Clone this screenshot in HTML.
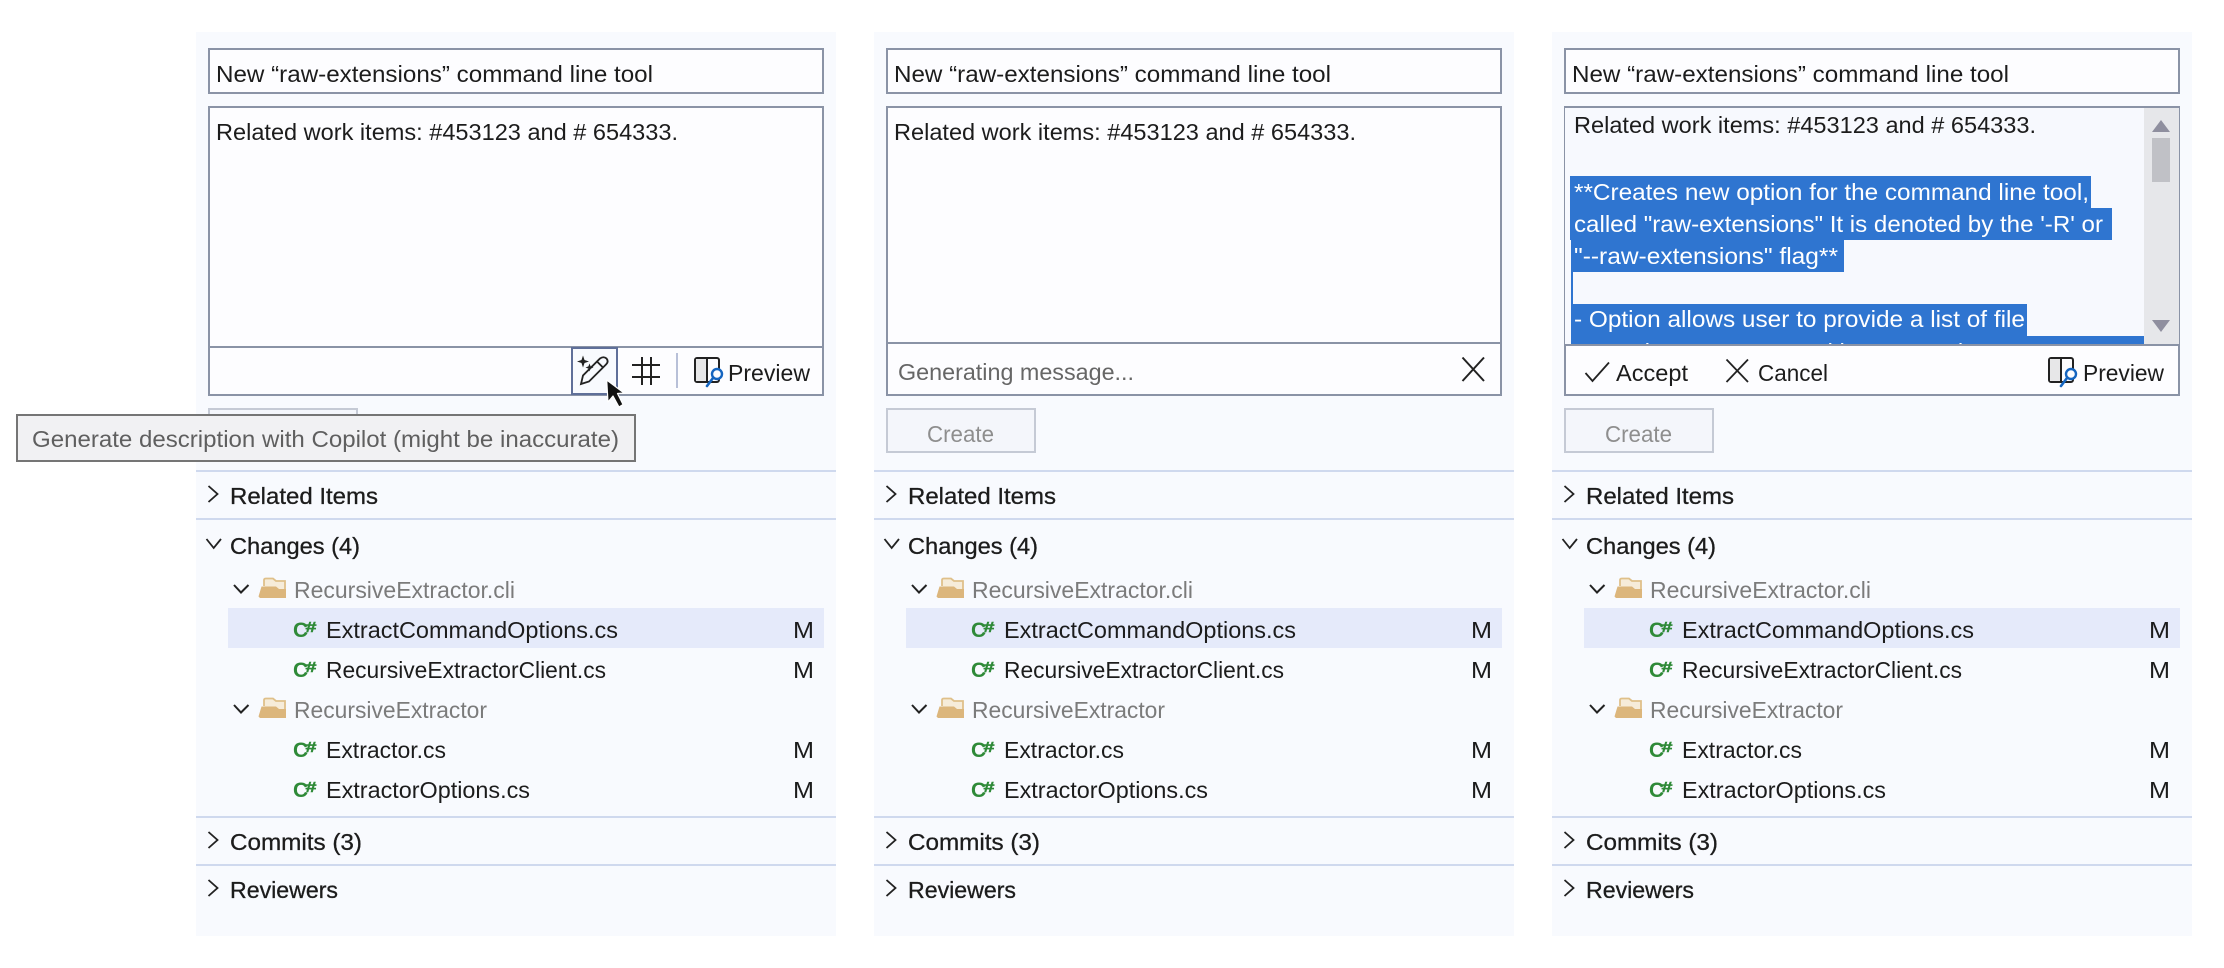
<!DOCTYPE html>
<html lang="en">
<head>
<meta charset="utf-8">
<title>Pull request panels</title>
<style>
html,body{margin:0;padding:0;background:#fff;width:2224px;height:968px;overflow:hidden}
svg{display:block;filter:blur(.3px)}
text{font-family:"Liberation Sans",sans-serif;font-size:23px;fill:#1c1c1c}
.h{stroke:#1c1c1c;stroke-width:.3px}
.g{fill:#7b7b7b}
.c{font-size:21px;font-weight:bold;fill:#2f8a38}
.s{font-size:15px;font-weight:bold;fill:#2f8a38;stroke:#2f8a38;stroke-width:.5px}
.w{fill:#fff}
.ic{fill:none;stroke:#222;stroke-width:1.8}
.box{fill:#fdfdff;stroke:#8a93a6;stroke-width:2}
.ln{fill:#cfd9ee}
</style>
</head>
<body>
<svg width="2224" height="968" viewBox="0 0 2224 968" xmlns="http://www.w3.org/2000/svg">
<defs>
<clipPath id="ta"><rect x="1565" y="107" width="579" height="237"/></clipPath>
<g id="fold">
<path d="M264,586 V580 Q264,578.5 266,578.5 H273 L276,581 H285 V598" fill="#f6ecda" stroke="#dfc08a" stroke-width="1.8"/>
<path d="M258.5,596.5 L261.5,586.5 H276 L279,589 H286 V598 H260 Z" fill="#dcb67c"/>
</g>
<g id="prev">
<rect x="695" y="358" width="24" height="24" rx="2" fill="#fdfdff" stroke="#222" stroke-width="2"/>
<rect x="696" y="359" width="11" height="22" fill="#e7e7e8"/>
<path d="M707,358 V382" stroke="#222" stroke-width="2"/>
<path d="M713,378 L707,386" stroke="#1565c0" stroke-width="2.6" stroke-linecap="round"/>
<circle cx="717" cy="374" r="5" fill="#fdfdff" stroke="#1565c0" stroke-width="2.4"/>
</g>
</defs>

<rect width="2224" height="968" fill="#fff"/>

<!-- PANEL 1 -->
<g>
<rect x="196" y="32" width="640" height="904" fill="#f8fafe"/>
<rect class="box" x="209" y="49" width="614" height="44"/>
<text x="216" y="82" textLength="437" lengthAdjust="spacingAndGlyphs">New “raw-extensions” command line tool</text>
<rect class="box" x="209" y="107" width="614" height="288"/>
<rect x="208" y="346" width="616" height="2" fill="#8a93a6"/>
<text x="216" y="140" textLength="462" lengthAdjust="spacingAndGlyphs">Related work items: #453123 and # 654333.</text>
<rect x="572" y="348" width="45" height="46" fill="#f8fafe" stroke="#5f6f99" stroke-width="2"/>
<path d="M583,355.5 L584.5,360 L589,361.5 L584.5,363 L583,367.5 L581.5,363 L577,361.5 L581.5,360 Z" fill="#222"/>
<path d="M589.5,363.5 L590.6,366.4 L593.5,367.5 L590.6,368.6 L589.5,371.5 L588.4,368.6 L585.5,367.5 L588.4,366.4 Z" fill="#222"/>
<path class="ic" d="M581,384 L583,375.5 L600,358.5 Q603.5,356 606.5,358.5 Q609,361.5 606,364.5 L589,381.5 Z M597,361.5 L603.5,368"/>
<path d="M642,357 V385 M651,357 V385 M632,365 H660 M632,377 H660" fill="none" stroke="#222" stroke-width="2"/>
<rect x="676" y="353" width="2" height="35" fill="#b8c0d8"/>
<use href="#prev"/>
<text x="728" y="381" textLength="82" lengthAdjust="spacingAndGlyphs">Preview</text>
<rect x="209" y="409" width="148" height="43" fill="#f4f6fb" stroke="#c5cad5" stroke-width="2"/>
<text class="g" x="273" y="442" textLength="67" lengthAdjust="spacingAndGlyphs" style="fill:#8e8e8e">Create</text>

<rect class="ln" x="196" y="470" width="640" height="2"/>
<path class="ic" d="M208.5,486 L217.5,494 L208.5,502"/>
<text class="h" x="230" y="504" textLength="148" lengthAdjust="spacingAndGlyphs">Related Items</text>
<rect class="ln" x="196" y="518" width="640" height="2"/>
<path class="ic" d="M206.5,539 L213.7,548 L221,539"/>
<text class="h" x="230" y="554" textLength="130" lengthAdjust="spacingAndGlyphs">Changes (4)</text>

<path class="ic" style="stroke-width:2" d="M234,585 L241,592.5 L248.5,585"/>
<use href="#fold"/>
<text class="g" x="294" y="598" textLength="221" lengthAdjust="spacingAndGlyphs">RecursiveExtractor.cli</text>

<rect x="228" y="608" width="596" height="40" fill="#e5eafa"/>
<text class="c" x="293" y="637">C</text><text class="s" x="305.5" y="632" textLength="11" lengthAdjust="spacingAndGlyphs">#</text>
<text x="326" y="638" textLength="292" lengthAdjust="spacingAndGlyphs">ExtractCommandOptions.cs</text>
<text x="793" y="638" textLength="21" lengthAdjust="spacingAndGlyphs">M</text>

<text class="c" x="293" y="677">C</text><text class="s" x="305.5" y="672" textLength="11" lengthAdjust="spacingAndGlyphs">#</text>
<text x="326" y="678" textLength="280" lengthAdjust="spacingAndGlyphs">RecursiveExtractorClient.cs</text>
<text x="793" y="678" textLength="21" lengthAdjust="spacingAndGlyphs">M</text>

<path class="ic" style="stroke-width:2" d="M234,705 L241,712.5 L248.5,705"/>
<use href="#fold" y="120"/>
<text class="g" x="294" y="718" textLength="193" lengthAdjust="spacingAndGlyphs">RecursiveExtractor</text>

<text class="c" x="293" y="757">C</text><text class="s" x="305.5" y="752" textLength="11" lengthAdjust="spacingAndGlyphs">#</text>
<text x="326" y="758" textLength="120" lengthAdjust="spacingAndGlyphs">Extractor.cs</text>
<text x="793" y="758" textLength="21" lengthAdjust="spacingAndGlyphs">M</text>

<text class="c" x="293" y="797">C</text><text class="s" x="305.5" y="792" textLength="11" lengthAdjust="spacingAndGlyphs">#</text>
<text x="326" y="798" textLength="204" lengthAdjust="spacingAndGlyphs">ExtractorOptions.cs</text>
<text x="793" y="798" textLength="21" lengthAdjust="spacingAndGlyphs">M</text>

<rect class="ln" x="196" y="816" width="640" height="2"/>
<path class="ic" d="M208.5,832 L217.5,840 L208.5,848"/>
<text class="h" x="230" y="850" textLength="132" lengthAdjust="spacingAndGlyphs">Commits (3)</text>
<rect class="ln" x="196" y="864" width="640" height="2"/>
<path class="ic" d="M208.5,880 L217.5,888 L208.5,896"/>
<text class="h" x="230" y="898" textLength="108" lengthAdjust="spacingAndGlyphs">Reviewers</text>

<!-- tooltip -->
<rect x="17" y="415" width="618" height="46" fill="#f1f1f3" stroke="#757575" stroke-width="2"/>
<text x="32" y="447" textLength="587" lengthAdjust="spacingAndGlyphs" style="fill:#5f5f5f">Generate description with Copilot (might be inaccurate)</text>
<!-- cursor -->
<path d="M606.7,380 L608,402 L613,396 L619,407 L623,404.5 L617.5,393.5 L624,393 Z" fill="#111" stroke="#fff" stroke-width="1.2" stroke-linejoin="round"/>
</g>

<!-- PANEL 2 -->
<g transform="translate(678 0)">
<rect x="196" y="32" width="640" height="904" fill="#f8fafe"/>
<rect class="box" x="209" y="49" width="614" height="44"/>
<text x="216" y="82" textLength="437" lengthAdjust="spacingAndGlyphs">New “raw-extensions” command line tool</text>
<rect class="box" x="209" y="107" width="614" height="288"/>
<rect x="208" y="342" width="616" height="2" fill="#8a93a6"/>
<text x="216" y="140" textLength="462" lengthAdjust="spacingAndGlyphs">Related work items: #453123 and # 654333.</text>
<text x="220" y="380" textLength="236" lengthAdjust="spacingAndGlyphs" style="fill:#666">Generating message...</text>
<path class="ic" style="stroke-width:2" d="M784.5,357.5 L806,381 M806,357.5 L784.5,381"/>
<rect x="209" y="409" width="148" height="43" fill="#f4f6fb" stroke="#c5cad5" stroke-width="2"/>
<text class="g" x="249" y="442" textLength="67" lengthAdjust="spacingAndGlyphs" style="fill:#8e8e8e">Create</text>

<rect class="ln" x="196" y="470" width="640" height="2"/>
<path class="ic" d="M208.5,486 L217.5,494 L208.5,502"/>
<text class="h" x="230" y="504" textLength="148" lengthAdjust="spacingAndGlyphs">Related Items</text>
<rect class="ln" x="196" y="518" width="640" height="2"/>
<path class="ic" d="M206.5,539 L213.7,548 L221,539"/>
<text class="h" x="230" y="554" textLength="130" lengthAdjust="spacingAndGlyphs">Changes (4)</text>

<path class="ic" style="stroke-width:2" d="M234,585 L241,592.5 L248.5,585"/>
<use href="#fold"/>
<text class="g" x="294" y="598" textLength="221" lengthAdjust="spacingAndGlyphs">RecursiveExtractor.cli</text>

<rect x="228" y="608" width="596" height="40" fill="#e5eafa"/>
<text class="c" x="293" y="637">C</text><text class="s" x="305.5" y="632" textLength="11" lengthAdjust="spacingAndGlyphs">#</text>
<text x="326" y="638" textLength="292" lengthAdjust="spacingAndGlyphs">ExtractCommandOptions.cs</text>
<text x="793" y="638" textLength="21" lengthAdjust="spacingAndGlyphs">M</text>

<text class="c" x="293" y="677">C</text><text class="s" x="305.5" y="672" textLength="11" lengthAdjust="spacingAndGlyphs">#</text>
<text x="326" y="678" textLength="280" lengthAdjust="spacingAndGlyphs">RecursiveExtractorClient.cs</text>
<text x="793" y="678" textLength="21" lengthAdjust="spacingAndGlyphs">M</text>

<path class="ic" style="stroke-width:2" d="M234,705 L241,712.5 L248.5,705"/>
<use href="#fold" y="120"/>
<text class="g" x="294" y="718" textLength="193" lengthAdjust="spacingAndGlyphs">RecursiveExtractor</text>

<text class="c" x="293" y="757">C</text><text class="s" x="305.5" y="752" textLength="11" lengthAdjust="spacingAndGlyphs">#</text>
<text x="326" y="758" textLength="120" lengthAdjust="spacingAndGlyphs">Extractor.cs</text>
<text x="793" y="758" textLength="21" lengthAdjust="spacingAndGlyphs">M</text>

<text class="c" x="293" y="797">C</text><text class="s" x="305.5" y="792" textLength="11" lengthAdjust="spacingAndGlyphs">#</text>
<text x="326" y="798" textLength="204" lengthAdjust="spacingAndGlyphs">ExtractorOptions.cs</text>
<text x="793" y="798" textLength="21" lengthAdjust="spacingAndGlyphs">M</text>

<rect class="ln" x="196" y="816" width="640" height="2"/>
<path class="ic" d="M208.5,832 L217.5,840 L208.5,848"/>
<text class="h" x="230" y="850" textLength="132" lengthAdjust="spacingAndGlyphs">Commits (3)</text>
<rect class="ln" x="196" y="864" width="640" height="2"/>
<path class="ic" d="M208.5,880 L217.5,888 L208.5,896"/>
<text class="h" x="230" y="898" textLength="108" lengthAdjust="spacingAndGlyphs">Reviewers</text>
</g>

<!-- PANEL 3 -->
<g transform="translate(1356 0)">
<rect x="196" y="32" width="640" height="904" fill="#f8fafe"/>
<rect class="box" x="209" y="49" width="614" height="44"/>
<text x="216" y="82" textLength="437" lengthAdjust="spacingAndGlyphs">New “raw-extensions” command line tool</text>
<rect class="box" x="209" y="107" width="614" height="288"/>
<rect x="209" y="108" width="614" height="236" fill="#f7f9fe"/>
<rect x="788" y="108" width="35" height="236" fill="#e6e7ea"/>
<path d="M796,132 L805,120 L814,132 Z" fill="#8f8f9f"/>
<rect x="796" y="138" width="18" height="44" fill="#c0c1c6"/>
<path d="M796,320 L814,320 L805,332 Z" fill="#8f8f9f"/>
<rect x="208" y="344" width="616" height="2" fill="#8a93a6"/>
<rect x="208" y="106" width="616" height="2" fill="#8a93a6"/>
</g>
<!-- selection & text, absolute coords -->
<g clip-path="url(#ta)">
<text x="1574" y="133" textLength="462" lengthAdjust="spacingAndGlyphs">Related work items: #453123 and # 654333.</text>
<rect x="1570" y="176" width="521" height="32" fill="#2f75d0"/>
<rect x="1570" y="208" width="542" height="32" fill="#2f75d0"/>
<rect x="1571" y="240" width="273" height="32" fill="#2f75d0"/>
<rect x="1571" y="272" width="2" height="32" fill="#2f75d0"/>
<rect x="1571" y="304" width="456" height="32" fill="#2f75d0"/>
<rect x="1571" y="336" width="573" height="8" fill="#2f75d0"/>
<text class="w" x="1574" y="200" textLength="515" lengthAdjust="spacingAndGlyphs">**Creates new option for the command line tool,</text>
<text class="w" x="1574" y="232" textLength="529" lengthAdjust="spacingAndGlyphs">called "raw-extensions" It is denoted by the '-R' or</text>
<text class="w" x="1574" y="264" textLength="264" lengthAdjust="spacingAndGlyphs">"--raw-extensions" flag**</text>
<text class="w" x="1574" y="327" textLength="451" lengthAdjust="spacingAndGlyphs">- Option allows user to provide a list of file</text>
<text class="w" x="1575" y="360" textLength="400" lengthAdjust="spacingAndGlyphs">extensions to process with commands</text>
</g>
<g>
<path class="ic" d="M1585.5,373 L1592.5,381 L1609,362.5"/>
<text x="1616" y="381" textLength="72" lengthAdjust="spacingAndGlyphs">Accept</text>
<path class="ic" d="M1726.5,359.5 L1748,382 M1748,359.5 L1726.5,382"/>
<text x="1758" y="381" textLength="70" lengthAdjust="spacingAndGlyphs">Cancel</text>
<use href="#prev" x="1354"/>
<text x="2083" y="381" textLength="81" lengthAdjust="spacingAndGlyphs">Preview</text>
</g>
<g transform="translate(1356 0)">
<rect x="209" y="409" width="148" height="43" fill="#f4f6fb" stroke="#c5cad5" stroke-width="2"/>
<text class="g" x="249" y="442" textLength="67" lengthAdjust="spacingAndGlyphs" style="fill:#8e8e8e">Create</text>

<rect class="ln" x="196" y="470" width="640" height="2"/>
<path class="ic" d="M208.5,486 L217.5,494 L208.5,502"/>
<text class="h" x="230" y="504" textLength="148" lengthAdjust="spacingAndGlyphs">Related Items</text>
<rect class="ln" x="196" y="518" width="640" height="2"/>
<path class="ic" d="M206.5,539 L213.7,548 L221,539"/>
<text class="h" x="230" y="554" textLength="130" lengthAdjust="spacingAndGlyphs">Changes (4)</text>

<path class="ic" style="stroke-width:2" d="M234,585 L241,592.5 L248.5,585"/>
<use href="#fold"/>
<text class="g" x="294" y="598" textLength="221" lengthAdjust="spacingAndGlyphs">RecursiveExtractor.cli</text>

<rect x="228" y="608" width="596" height="40" fill="#e5eafa"/>
<text class="c" x="293" y="637">C</text><text class="s" x="305.5" y="632" textLength="11" lengthAdjust="spacingAndGlyphs">#</text>
<text x="326" y="638" textLength="292" lengthAdjust="spacingAndGlyphs">ExtractCommandOptions.cs</text>
<text x="793" y="638" textLength="21" lengthAdjust="spacingAndGlyphs">M</text>

<text class="c" x="293" y="677">C</text><text class="s" x="305.5" y="672" textLength="11" lengthAdjust="spacingAndGlyphs">#</text>
<text x="326" y="678" textLength="280" lengthAdjust="spacingAndGlyphs">RecursiveExtractorClient.cs</text>
<text x="793" y="678" textLength="21" lengthAdjust="spacingAndGlyphs">M</text>

<path class="ic" style="stroke-width:2" d="M234,705 L241,712.5 L248.5,705"/>
<use href="#fold" y="120"/>
<text class="g" x="294" y="718" textLength="193" lengthAdjust="spacingAndGlyphs">RecursiveExtractor</text>

<text class="c" x="293" y="757">C</text><text class="s" x="305.5" y="752" textLength="11" lengthAdjust="spacingAndGlyphs">#</text>
<text x="326" y="758" textLength="120" lengthAdjust="spacingAndGlyphs">Extractor.cs</text>
<text x="793" y="758" textLength="21" lengthAdjust="spacingAndGlyphs">M</text>

<text class="c" x="293" y="797">C</text><text class="s" x="305.5" y="792" textLength="11" lengthAdjust="spacingAndGlyphs">#</text>
<text x="326" y="798" textLength="204" lengthAdjust="spacingAndGlyphs">ExtractorOptions.cs</text>
<text x="793" y="798" textLength="21" lengthAdjust="spacingAndGlyphs">M</text>

<rect class="ln" x="196" y="816" width="640" height="2"/>
<path class="ic" d="M208.5,832 L217.5,840 L208.5,848"/>
<text class="h" x="230" y="850" textLength="132" lengthAdjust="spacingAndGlyphs">Commits (3)</text>
<rect class="ln" x="196" y="864" width="640" height="2"/>
<path class="ic" d="M208.5,880 L217.5,888 L208.5,896"/>
<text class="h" x="230" y="898" textLength="108" lengthAdjust="spacingAndGlyphs">Reviewers</text>
</g>
</svg>
</body>
</html>
